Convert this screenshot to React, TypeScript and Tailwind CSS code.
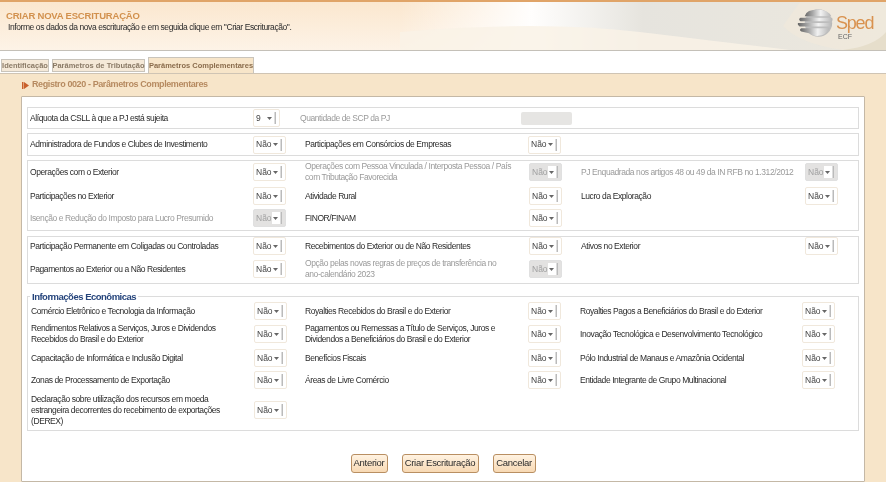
import React from 'react'

type Field = { label?: React.ReactNode; value?: string; disabled?: boolean; small?: boolean }

const labelText = 'text-[8.5px] tracking-[-0.42px]'

function Select({ value = 'Não', disabled, small }: Field) {
  return (
    <div
      className={`flex h-[18px] items-center rounded-[2px] border pl-[2px] text-[8.5px] ${small ? 'w-[27px]' : 'w-[33px]'} ${
        disabled ? 'border-[#e0e0e0] bg-[#e3e2e1] text-[#a0a0a0]' : 'border-[#f0e8dc] bg-white text-[#444]'
      }`}
    >
      <span className="flex-1">{value}</span>
      <span className={`flex h-[12px] w-[9px] items-center justify-center ${disabled ? 'bg-white' : ''}`}>
        <svg width="5" height="3" viewBox="0 0 5 3">
          <path d="M0 0h5L2.5 3z" fill="#666" />
        </svg>
      </span>
      <span className="mr-[3px] h-[12px] w-[2px] bg-gradient-to-r from-[#eee] to-[#aaa]" />
    </div>
  )
}

function Label({ label, disabled }: Field) {
  return (
    <div className={`max-w-[212px] leading-[11px] ${labelText} ${disabled ? 'text-[#9a9a9a]' : 'text-[#2b2b2b]'}`}>
      {label}
    </div>
  )
}

function FieldRow({ fields, className, grid }: { fields: Field[]; className: string; grid: string }) {
  return (
    <div className={`grid h-[18px] grid-rows-[18px] items-center ${grid} ${className}`}>
      {[0, 1, 2].map((i) => {
        const f = fields[i]
        if (!f) return <React.Fragment key={i}><div /><div /></React.Fragment>
        return (
          <React.Fragment key={i}>
            <Label {...f} />
            <Select {...f} />
          </React.Fragment>
        )
      })}
    </div>
  )
}

const gridA = 'grid-cols-[223px_52px_224px_52px_224px_33px] pl-[2px]'
const gridB = 'grid-cols-[223px_51px_223px_52px_222px_33px] pl-[3px]'

const exteriorRows: { h: string; fields: Field[] }[] = [
  {
    h: '',
    fields: [
      { label: 'Operações com o Exterior' },
      { label: 'Operações com Pessoa Vinculada / Interposta Pessoa / País com Tributação Favorecida', disabled: true },
      {
        label: <span className="whitespace-nowrap">PJ Enquadrada nos artigos 48 ou 49 da IN RFB no 1.312/2012</span>,
        disabled: true,
      },
    ],
  },
  {
    h: 'mt-[6px]',
    fields: [{ label: 'Participações no Exterior' }, { label: 'Atividade Rural' }, { label: 'Lucro da Exploração' }],
  },
  {
    h: 'mt-[4px]',
    fields: [{ label: 'Isenção e Redução do Imposto para Lucro Presumido', disabled: true }, { label: 'FINOR/FINAM' }],
  },
]

const economicRows: { h: string; fields: Field[] }[] = [
  {
    h: '',
    fields: [
      { label: 'Comércio Eletrônico e Tecnologia da Informação' },
      { label: 'Royalties Recebidos do Brasil e do Exterior' },
      { label: 'Royalties Pagos a Beneficiários do Brasil e do Exterior' },
    ],
  },
  {
    h: 'mt-[5px]',
    fields: [
      { label: 'Rendimentos Relativos a Serviços, Juros e Dividendos Recebidos do Brasil e do Exterior' },
      { label: 'Pagamentos ou Remessas a Título de Serviços, Juros e Dividendos a Beneficiários do Brasil e do Exterior' },
      { label: 'Inovação Tecnológica e Desenvolvimento Tecnológico' },
    ],
  },
  {
    h: 'mt-[6px]',
    fields: [
      { label: 'Capacitação de Informática e Inclusão Digital' },
      { label: 'Benefícios Fiscais' },
      { label: 'Pólo Industrial de Manaus e Amazônia Ocidental' },
    ],
  },
  {
    h: 'mt-[4px]',
    fields: [
      { label: 'Zonas de Processamento de Exportação' },
      { label: 'Áreas de Livre Comércio' },
      { label: 'Entidade Integrante de Grupo Multinacional' },
    ],
  },
  {
    h: 'mt-[12px]',
    fields: [{ label: 'Declaração sobre utilização dos recursos em moeda estrangeira decorrentes do recebimento de exportações (DEREX)' }],
  },
]

function ActionButton({ children, className }: { children: React.ReactNode; className: string }) {
  return (
    <button className={`h-[19px] whitespace-nowrap rounded-[3px] border border-[#b98f62] bg-gradient-to-b from-[#fff3e2] to-[#f8d9b4] text-[9.5px] tracking-[-0.3px] text-[#2b2b2b] ${className}`}>
      {children}
    </button>
  )
}

function SpedLogo() {
  return (
    <svg width="36" height="28" viewBox="0 0 42 32" className="shrink-0">
      <defs>
        <linearGradient id="band" x1="0" x2="1" y1="0" y2="0">
          <stop offset="0" stopColor="#666" />
          <stop offset="0.3" stopColor="#a8a8a8" />
          <stop offset="0.6" stopColor="#f2f2f2" />
          <stop offset="1" stopColor="#b5b5b5" />
        </linearGradient>
      </defs>
      <circle cx="25" cy="16" r="16" fill="#bdbdbd" />
      <path d="M14 2q11-4 21 1 4 2 5 5H9q1-4 5-6z" fill="url(#band)" />
      <path d="M4 10h37q1 2 0 4H4q-3-2 0-4z" fill="url(#band)" />
      <path d="M1 16h40q0 2-1 4H3q-3-2-2-4z" fill="url(#band)" />
      <path d="M5 22h33q-4 8-13 9-7 1-11-3l-9-2q-3-2 0-4z" fill="url(#band)" />
    </svg>
  )
}

export default function App() {
  return (
    <div className="flex h-[482px] w-[886px] flex-col overflow-hidden bg-white font-['Liberation_Sans',Arial,sans-serif] blur-[0.3px]">
      {/* Header */}
      <div className="relative h-[51px] shrink-0 overflow-hidden border-t-2 border-b border-t-[#e0a468] border-b-[#c4c0b8] bg-gradient-to-b from-[#fbe7cf] to-[#fdf3e7]">
        <svg className="absolute inset-0" width="886" height="48" viewBox="0 0 886 48">
          <defs>
            <linearGradient id="wave" x1="0" x2="1" y1="0" y2="0">
              <stop offset="0" stopColor="#fff" stopOpacity="0" />
              <stop offset="0.27" stopColor="#fff" stopOpacity="0.95" />
              <stop offset="0.5" stopColor="#e6e4de" />
              <stop offset="1" stopColor="#ece8de" />
            </linearGradient>
          </defs>
          <rect x="400" y="0" width="486" height="48" fill="url(#wave)" />
          <path d="M400 30Q540 18 640 30T790 48H400z" fill="#f9f2e6" opacity="0.85" />
          <path d="M783 24Q800 42 843 48H886V0H800z" fill="#f2eadb" opacity="0.6" />
          <path d="M843 48Q875 44 886 30V48z" fill="#e6decb" />
        </svg>
        <div className="relative px-[6px] pt-[8px]">
          <div className="text-[9.5px] font-bold leading-[12px] tracking-[-0.2px] text-[#d2914e]">CRIAR NOVA ESCRITURAÇÃO</div>
          <div className={`pl-[2px] leading-[11px] text-[#2b2b2b] ${labelText}`}>
            Informe os dados da nova escrituração e em seguida clique em "Criar Escrituração".
          </div>
        </div>
        <div className="absolute right-[14px] top-[7px] flex items-start gap-[3px]">
          <SpedLogo />
          <div className="flex w-[36px] flex-col pt-[4px]">
            <span className="text-[18px] leading-[20px] tracking-[-1.2px] text-[#d9924f]">Sped</span>
            <span className="pl-[2px] text-[7px] leading-[8px] text-[#666]">ECF</span>
          </div>
        </div>
      </div>

      {/* Tabs */}
      <div className="flex h-[23px] shrink-0 items-end gap-[3px] whitespace-nowrap border-b border-b-[#cfc4b4] pl-px">
        <div className="mb-px flex h-[13px] w-[48px] items-center justify-center border border-[#c9c4bb] bg-[#f5e9d8] text-[7.5px] font-bold text-[#8a7a66]">
          Identificação
        </div>
        <div className="mb-px flex h-[13px] w-[93px] items-center justify-center border border-[#c9c4bb] bg-[#f5e9d8] text-[7.5px] font-bold text-[#8a7a66]">
          Parâmetros de Tributação
        </div>
        <div className="flex h-[16px] w-[106px] items-center justify-center border border-b-0 border-[#c9c4bb] bg-[#f7e5c9] text-[7.5px] font-bold text-[#8a6c4c]">
          Parâmetros Complementares
        </div>
      </div>

      {/* Page */}
      <div className="flex min-h-0 flex-1 flex-col bg-[#f7e5c9] pl-[21px] pr-[21px]">
        <div className="flex h-[22px] shrink-0 items-center gap-[3px] pl-[1px] text-[9px] font-bold tracking-[-0.4px] text-[#b68a60]">
          <svg width="7" height="7" viewBox="0 0 7 7">
            <path d="M0 0h1.5v7H0zM2 0l5 3.5L2 7z" fill="#c9602c" />
          </svg>
          Registro 0020 - Parâmetros Complementares
        </div>
        <div className="flex flex-1 flex-col rounded-[1px] border border-[#c4b8a6] bg-white px-[5px] pt-[10px]">
          {/* Aliquota */}
          <div className="flex h-[22px] shrink-0 items-center border border-[#dcdcdc] pl-[2px]">
            <div className={`w-[223px] text-[#2b2b2b] ${labelText}`}>Alíquota da CSLL à que a PJ está sujeita</div>
            <Select value="9" small />
            <div className={`ml-[20px] w-[221px] text-[#9a9a9a] ${labelText}`}>Quantidade de SCP da PJ</div>
            <div className="h-[13px] w-[51px] rounded-[2px] bg-[#e6e5e3]" />
          </div>

          {/* Administradora */}
          <div className="mt-[4px] flex h-[23px] shrink-0 items-center border border-[#dcdcdc] pl-[2px]">
            <div className={`w-[223px] text-[#2b2b2b] ${labelText}`}>Administradora de Fundos e Clubes de Investimento</div>
            <Select />
            <div className={`ml-[19px] w-[223px] text-[#2b2b2b] ${labelText}`}>Participações em Consórcios de Empresas</div>
            <Select />
          </div>

          {/* Exterior */}
          <div className="mt-[4px] h-[71px] shrink-0 border border-[#dcdcdc] pt-[2px]">
            {exteriorRows.map((r, i) => (
              <FieldRow key={i} fields={r.fields} grid={gridA} className={r.h} />
            ))}
          </div>

          {/* Coligadas */}
          <div className="mt-[5px] h-[48px] shrink-0 border border-[#dcdcdc]">
            <FieldRow
              grid={gridA}
              className=""
              fields={[
                { label: 'Participação Permanente em Coligadas ou Controladas' },
                { label: 'Recebimentos do Exterior ou de Não Residentes' },
                { label: 'Ativos no Exterior' },
              ]}
            />
            <FieldRow
              grid={gridA}
              className="mt-[5px]"
              fields={[
                { label: 'Pagamentos ao Exterior ou a Não Residentes' },
                {
                  label: (
                    <>
                      Opção pelas novas regras de preços de transferência no{' '}
                      <span className="whitespace-nowrap">ano-calendário 2023</span>
                    </>
                  ),
                  disabled: true,
                },
              ]}
            />
          </div>

          {/* Informacoes Economicas */}
          <fieldset className="mt-[7px] h-[140px] shrink-0 border border-[#dcdcdc]">
            <legend className="ml-[2px] px-[2px] text-[9.5px] font-bold leading-[11px] tracking-[-0.5px] text-[#26457c]">Informações Econômicas</legend>
            {economicRows.map((r, i) => (
              <FieldRow key={i} fields={r.fields} grid={gridB} className={r.h} />
            ))}
          </fieldset>

          {/* Actions */}
          <div className="mt-[23px] flex justify-center gap-[14px]">
            <ActionButton className="w-[37px]">Anterior</ActionButton>
            <ActionButton className="w-[77px]">Criar Escrituração</ActionButton>
            <ActionButton className="w-[43px]">Cancelar</ActionButton>
          </div>
        </div>
      </div>
    </div>
  )
}
